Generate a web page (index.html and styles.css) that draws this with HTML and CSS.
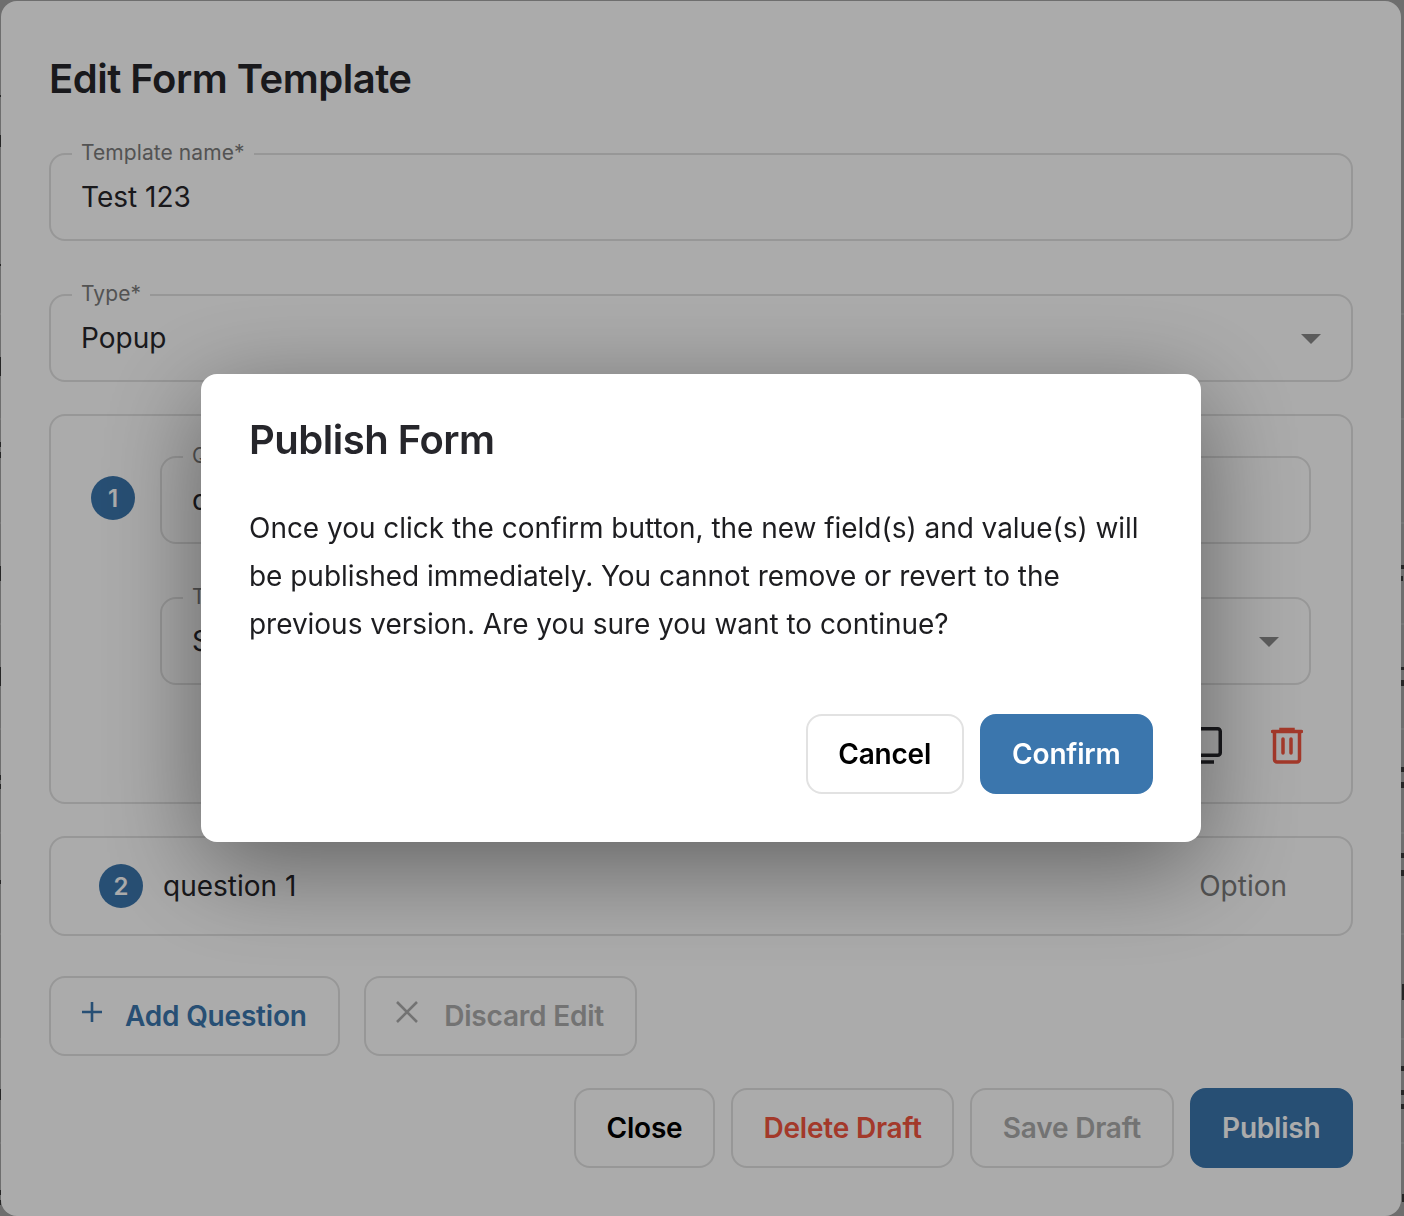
FILE: index.html
```html
<!DOCTYPE html>
<html lang="en">
<head>
<meta charset="utf-8">
<title>Edit Form Template</title>
<link rel="stylesheet" href="styles.css">
</head>
<body>
<div class="backdrop">
  <svg class="edge edge-left" viewBox="0 0 2 1216" aria-hidden="true">
    <path class="edge-lines" d="M0 314h2M0 419h2M0 523h2M0 624h2M0 729h2M0 833h2M0 934h2M0 1039h2M0 1143h2"/>
    <path class="edge-marks" d="M0 95h1v2H0zM0 135h1v12H0zM0 264h1v2H0zM0 357h1v19H0zM0 442h1v5H0zM0 452h1v6H0zM0 566h1v15H0zM0 667h1v19H0zM0 775h1v5H0zM0 784h1v5H0zM0 880h1v4H0zM0 1089h1v11H0zM0 1190h1v5H0zM0 1200h1v5H0z"/>
  </svg>
  <svg class="edge edge-right" viewBox="0 0 3 1216" aria-hidden="true">
    <path class="edge-lines" d="M0 314h3M0 419h3M0 523h3M0 624h3M0 729h3M0 833h3M0 934h3M0 1039h3M0 1143h3"/>
    <path class="edge-marks" d="M0 565h3v4H0zM0 576h2v5H0zM0 667h3v3H0zM0 680h3v6H0zM0 767h3v5H0zM0 782h3v6H0zM0 853h3v5H0zM0 870h3v6H0zM1 984h2v16H1zM0 1066h3v5H0zM0 1090h3v5H0zM0 1104h3v5H0zM1 1194h2v8H1z"/>
  </svg>
  <main class="sheet">
    <h1 class="title">Edit Form Template</h1>
    <div class="field">
      <label class="field-label">Template name*</label>
      <span class="field-value">Test 123</span>
    </div>
    <div class="field">
      <label class="field-label">Type*</label>
      <span class="field-value">Popup</span>
      <svg class="caret" viewBox="0 0 20 10" aria-hidden="true"><path d="M0 0h20L10 10z"/></svg>
    </div>
    <section class="question-open">
      <div class="q-grid">
        <span class="badge">1</span>
        <div class="q-fields">
          <div class="field">
            <label class="field-label">Question*</label>
            <span class="field-value">question 1</span>
          </div>
          <div class="field">
            <label class="field-label">Type*</label>
            <span class="field-value">Select</span>
            <svg class="caret" viewBox="0 0 20 10" aria-hidden="true"><path d="M0 0h20L10 10z"/></svg>
          </div>
        </div>
      </div>
      <div class="q-actions">
        <svg class="icon-screen" viewBox="0 0 40 40" aria-hidden="true"><rect x="5" y="2.750" width="31.250" height="26.500" rx="2.500"/><path d="M9 36h21"/></svg>
        <svg class="icon-trash" viewBox="0 0 32 38" aria-hidden="true"><path d="M1.500 4.500h29M10 4V2.500h12V4M3.500 5v27.500a2.500 2.500 0 0 0 2.500 2.500h20a2.500 2.500 0 0 0 2.500-2.500V5M12 12v14M20 12v14"/></svg>
      </div>
    </section>
    <section class="question-closed">
      <span class="badge">2</span>
      <span class="q-text">question 1</span>
      <span class="q-kind">Option</span>
    </section>
    <div class="row-tools">
      <button class="btn btn-add" type="button">
        <svg class="tool-icon tool-plus" viewBox="0 0 24 24" aria-hidden="true"><path d="M12 2v20M2 12h20"/></svg>
        Add Question
      </button>
      <button class="btn btn-muted" type="button">
        <svg class="tool-icon tool-x" viewBox="0 0 24 24" aria-hidden="true"><path d="M2 2l20 20M22 2L2 22"/></svg>
        Discard Edit
      </button>
    </div>
    <div class="row-footer">
      <button class="btn btn-plain" type="button">Close</button>
      <button class="btn btn-danger" type="button">Delete Draft</button>
      <button class="btn btn-muted" type="button">Save Draft</button>
      <button class="btn btn-primary" type="button">Publish</button>
    </div>
  </main>
</div>
<div class="overlay">
  <div class="modal" role="dialog">
    <h2 class="title">Publish Form</h2>
    <p class="modal-text">Once you click the confirm button, the new field(s) and value(s) will be published immediately. You cannot remove or revert to the previous version. Are you sure you want to continue?</p>
    <div class="modal-actions">
      <button class="btn btn-plain" type="button">Cancel</button>
      <button class="btn btn-primary" type="button">Confirm</button>
    </div>
  </div>
</div>
</body>
</html>
```
FILE: styles.css
```css
* { box-sizing: border-box; }
html, body { margin: 0; height: 100%; }
body { font-family: Inter, "Liberation Sans", sans-serif; color: #26262b; background: #a4a4a4; overflow: hidden; }
.backdrop { position: relative; height: 1216px; padding: 1px 3px 0 1px; }
.edge { position: absolute; top: 0; height: 1216px; }
.edge-left { left: 0; width: 2px; }
.edge-right { right: 0; width: 3px; }
.edge-lines { stroke: #bdbdbd; stroke-width: 1; fill: none; }
.edge-marks { fill: #3a3a3a; }
.sheet { position: relative; height: 1215px; background: #fff; border-radius: 16px; padding: 48px; display: flex; flex-direction: column; }
.title { margin: 0; font-size: 40px; line-height: 60px; font-weight: 600; color: #26262b; letter-spacing: -0.5px; }
.field { position: relative; height: 88px; border: 2px solid #e2e2e2; border-radius: 16px; padding: 0 30px; display: flex; align-items: center; justify-content: space-between; }
.sheet > .title + .field { margin-top: 44px; }
.sheet > .field + .field { margin-top: 53px; }
.field-label { position: absolute; left: 21px; top: -15px; background: #fff; padding: 0 9px; font-size: 21px; line-height: 26px; letter-spacing: 0.08px; color: #7c7c7c; }
.field-value { font-size: 28px; line-height: 36px; color: #26262b; }
.caret { width: 20px; height: 10px; fill: #8a8a8a; margin: 2px 0 0; }
.question-open { margin-top: 32px; height: 390px; border: 2px solid #e2e2e2; border-radius: 16px; padding: 40px 40px 0 40px; }
.q-grid { display: flex; align-items: flex-start; gap: 25px; }
.badge { flex: none; width: 44px; height: 44px; border-radius: 50%; background: #3b76ad; color: #fff; font-size: 24px; font-weight: 600; display: flex; align-items: center; justify-content: center; }
.q-grid .badge { margin-top: 20px; }
.q-fields { flex: 1; display: flex; flex-direction: column; gap: 53px; }
.q-actions { display: flex; justify-content: flex-end; align-items: center; gap: 47px; margin-top: 41px; padding-right: 8px; }
.icon-screen { width: 40px; height: 40px; fill: none; stroke: #26262b; stroke-width: 3.500; }
.icon-trash { width: 32px; height: 38px; fill: none; stroke: #f4553f; stroke-width: 3.500; stroke-linecap: round; }
.question-closed { margin-top: 32px; height: 100px; border: 2px solid #e2e2e2; border-radius: 16px; padding: 0 64px 0 48px; display: flex; align-items: center; gap: 20px; }
.q-text { flex: 1; font-size: 28px; color: #26262b; }
.q-kind { font-size: 28px; color: #7c7c7c; }
.row-tools { margin-top: 40px; display: flex; gap: 24px; }
.row-footer { margin-top: 32px; display: flex; justify-content: flex-end; gap: 16px; }
.btn { height: 80px; border-radius: 16px; border: 2px solid #e2e2e2; background: #fff; padding: 0 30.500px; font: 600 28px/1 Inter, "Liberation Sans", sans-serif; letter-spacing: -0.2px; display: inline-flex; align-items: center; }
.btn-plain { color: #000; }
.btn-danger { color: #f4553f; }
.btn-muted { color: #acacac; }
.btn-add { color: #3b76ad; padding-right: 31.500px; }
.btn-primary { background: #3b76ad; border-color: #3b76ad; color: #fff; }
.tool-icon { width: 24px; height: 24px; fill: none; stroke: currentColor; stroke-width: 2.600; margin-top: -8px; margin-left: -1.500px; }
.tool-plus { margin-right: 21px; }
.tool-x { margin-right: 25px; }
.overlay { position: fixed; inset: 0; background: rgba(0,0,0,.33); display: flex; align-items: flex-start; justify-content: center; }
.modal { width: 1000px; height: 468px; margin: 374px 2px 0 0; background: #fff; border-radius: 16px; padding: 36px 48px 48px; box-shadow: 0 24px 100px rgba(0,0,0,.44); display: flex; flex-direction: column; }
.modal-text { margin: 34px 0 0; font-size: 28px; line-height: 48px; letter-spacing: -0.03px; color: #1d1d20; }
.modal-actions { margin-top: auto; display: flex; justify-content: flex-end; gap: 16px; }
```
